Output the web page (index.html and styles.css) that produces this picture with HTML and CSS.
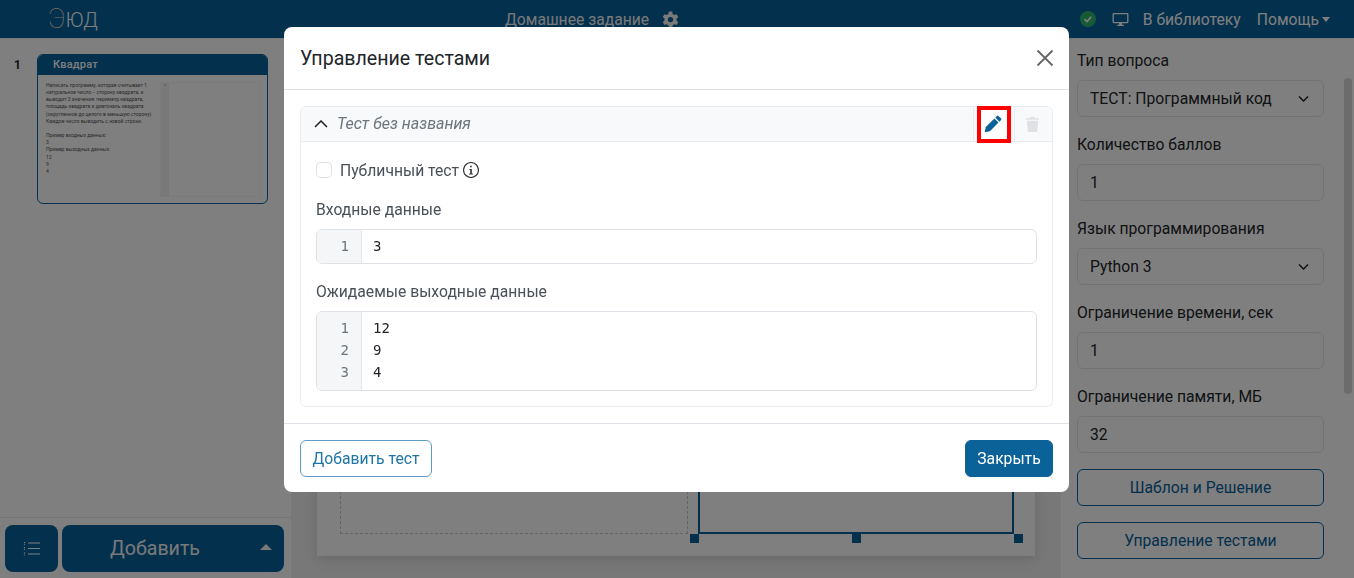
FILE: index.html
```html
<!DOCTYPE html>
<html lang="ru">
<head>
<meta charset="utf-8">
<title>Управление тестами</title>
<link rel="stylesheet" href="styles.css">
</head>
<body>
<div class="app">
  <header class="topbar">
    <div class="logo"><span class="logo-e">Э</span><span class="logo-rest">ЮД</span></div>
    <div class="top-center">
      <span>Домашнее задание</span>
      <svg class="gear" viewBox="1 0.5 14 14"><path fill="currentColor" d="M9.4 1h-2.8l-.4 2a5 5 0 0 0-1.3.75l-1.9-.65L1.6 5.500 3.100 6.850a5 5 0 0 0 0 1.500L1.600 9.700 3 12.100l1.900-.65a5 5 0 0 0 1.300.75l.4 2h2.800l.4-2a5 5 0 0 0 1.300-.75l1.900.65 1.400-2.400-1.500-1.350a5 5 0 0 0 0-1.500l1.500-1.350L13 3.100l-1.900.65A5 5 0 0 0 9.800 3zM8 5.400a2.200 2.200 0 1 1 0 4.400 2.200 2.200 0 0 1 0-4.400z"/></svg>
    </div>
    <div class="top-right">
      <span class="status"><svg viewBox="0 0 16 16"><path fill="none" stroke="currentColor" stroke-width="1.6" d="M4.500 8.200l2.400 2.300 4.400-4.600"/></svg></span>
      <svg class="monitor" viewBox="0 0 18 16"><path fill="none" stroke="currentColor" stroke-width="1.4" d="M2 1.700h14a.8.8 0 0 1 .8.8v8a.8.8 0 0 1-.8.8H2a.8.8 0 0 1-.8-.8v-8a.8.8 0 0 1 .8-.8z"/><path fill="currentColor" d="M7.500 11.500h3v2h2v1.300h-7v-1.300h2z"/></svg>
      <span class="lib">В библиотеку</span>
      <span class="help">Помощь<i class="caret"></i></span>
    </div>
  </header>
  <div class="workspace">
    <aside class="slides">
      <div class="slide-list">
        <div class="slide-num">1</div>
        <div class="thumb">
          <div class="thumb-head">Квадрат</div>
          <div class="thumb-body">
            <div class="thumb-text">
              <p>Написать программу, которая считывает 1<br>натуральное число − сторону квадрата, и<br>выводит 3 значения: периметр квадрата,<br>площадь квадрата и диагональ квадрата<br>(округленное до целого в меньшую сторону).<br>Каждое число выводить с новой строки.</p>
              <p class="gap">Пример входных данных:</p>
              <p>3</p>
              <p>Пример выходных данных:</p>
              <p>12</p>
              <p>9</p>
              <p>4</p>
            </div>
            <div class="thumb-code"><div class="thumb-gutter">1</div></div>
          </div>
        </div>
      </div>
      <div class="slide-actions">
        <button class="btn-list" type="button" aria-label="Список">
          <svg viewBox="0 0 18 14"><path fill="none" stroke="currentColor" stroke-width="1.2" d="M5 1.500h12M5 7h12M5 12.500h12"/><path fill="none" stroke="currentColor" stroke-width="1.2" stroke-dasharray="1.2 1.1" d="M1.500 .5v3M1.500 5.500v3M1.500 11v3"/></svg>
        </button>
        <button class="btn-add" type="button"><span>Добавить</span><i class="caret big"></i></button>
      </div>
    </aside>
    <main class="canvas">
      <div class="slide">
        <div class="drop-zone"></div>
        <div class="selected">
          <i class="handle h-left"></i><i class="handle h-mid"></i><i class="handle h-right"></i>
        </div>
      </div>
    </main>
    <aside class="props">
      <div class="prop-scroll"></div>
      <div class="prop">
        <label>Тип вопроса</label>
        <div class="field select">ТЕСТ: Программный код<svg viewBox="0 0 12 8"><path fill="none" stroke="currentColor" stroke-width="1.5" d="M1.500 1.500L6 6l4.500-4.500"/></svg></div>
      </div>
      <div class="prop">
        <label>Количество баллов</label>
        <div class="field">1</div>
      </div>
      <div class="prop">
        <label>Язык программирования</label>
        <div class="field select">Python 3<svg viewBox="0 0 12 8"><path fill="none" stroke="currentColor" stroke-width="1.5" d="M1.500 1.500L6 6l4.500-4.500"/></svg></div>
      </div>
      <div class="prop">
        <label>Ограничение времени, сек</label>
        <div class="field">1</div>
      </div>
      <div class="prop">
        <label>Ограничение памяти, МБ</label>
        <div class="field">32</div>
      </div>
      <button class="prop-btn" type="button">Шаблон и Решение</button>
      <button class="prop-btn" type="button">Управление тестами</button>
    </aside>
  </div>
</div>

<div class="backdrop"></div>

<section class="modal">
  <div class="modal-head">
    <h2>Управление тестами</h2>
    <svg class="close" viewBox="0 0 18 18"><path fill="none" stroke="currentColor" stroke-width="1.8" d="M1.500 1.500l15 15M16.500 1.500l-15 15"/></svg>
  </div>
  <div class="modal-body">
    <div class="test">
      <div class="test-head">
        <svg class="chev" viewBox="0 0 14 8"><path fill="none" stroke="currentColor" stroke-width="1.5" d="M1 7l6-6 6 6"/></svg>
        <span class="test-name">Тест без названия</span>
        <div class="tool edit">
          <svg viewBox="0 0 18 18"><path fill="#0a6299" d="M13 .9a1 1 0 0 1 1.400 0l2.700 2.700a1 1 0 0 1 0 1.400l-1.700 1.700-4.100-4.100zM10.400 3.500l4.100 4.100-8.600 8.600-5.200 1.100 1.100-5.200z"/></svg>
        </div>
        <div class="tool trash">
          <svg viewBox="0 0 14 16"><path fill="#dfe1e4" d="M4.600 0h4.800l.6 1.200H14v1.700H0V1.200h4zM1 4h12l-.8 11a1 1 0 0 1-1 1H2.800a1 1 0 0 1-1-1z"/></svg>
        </div>
      </div>
      <div class="test-body">
        <div class="check-row">
          <span class="check"></span>
          <span>Публичный тест</span>
          <svg class="info" viewBox="0.500 0.500 15 15"><circle cx="8" cy="8" r="7" fill="none" stroke="currentColor" stroke-width="1.1"/><path fill="currentColor" d="M7.100 3.900h1.600v1.600H7.100zM6.600 7h2.200v4.300h1v1H6.300v-1h1V8h-.7z"/></svg>
        </div>
        <div class="editor-label">Входные данные</div>
        <div class="editor">
          <div class="gutter"><div>1</div></div>
          <div class="code"><div>3</div></div>
        </div>
        <div class="editor-label">Ожидаемые выходные данные</div>
        <div class="editor editor-tall">
          <div class="gutter"><div>1</div><div>2</div><div>3</div></div>
          <div class="code"><div>12</div><div>9</div><div>4</div></div>
        </div>
      </div>
    </div>
  </div>
  <div class="modal-foot">
    <button class="btn-outline" type="button">Добавить тест</button>
    <button class="btn-solid" type="button">Закрыть</button>
  </div>
</section>
</body>
</html>
```
FILE: styles.css
```css
* { box-sizing: border-box; }
html, body { margin: 0; height: 100%; overflow: hidden; }
body { font-family: Roboto, "Liberation Sans", sans-serif; font-size: 15.7px; color: #212529; background: #fff; }
button { font: inherit; cursor: pointer; }

.app { height: 578px; display: flex; flex-direction: column; }

.topbar { height: 39px; flex: none; background: #06609a; border-bottom: 1px solid #e8eef3; color: #fff; display: flex; align-items: center; position: relative; }
.logo { margin-left: 48px; width: 300px; display: flex; align-items: center; color: #fff; line-height: 1; }
.logo-e { font-size: 27px; font-weight: 100; color: #f0dcc8; }
.logo-rest { font-size: 20px; font-weight: 300; margin-top: 2px; }
.top-center { position: absolute; left: 505px; top: 0; height: 38px; display: flex; align-items: center; gap: 13px; color: #f2f2f2; }
.gear { width: 17px; height: 17px; }
.top-right { margin-left: auto; display: flex; align-items: center; margin-right: 24px; }
.status { width: 16px; height: 16px; border-radius: 50%; background: #2fb56c; color: #fff; display: flex; margin-right: 16px; }
.status svg { width: 16px; height: 16px; }
.monitor { width: 17px; height: 15px; margin-right: 14px; }
.lib { margin-right: 16px; }
.help { display: flex; align-items: center; }
.caret { width: 0; height: 0; border-left: 4.5px solid transparent; border-right: 4.5px solid transparent; border-bottom: 0; border-top: 5px solid currentColor; margin-left: 3px; }
.caret.big { border-top: 0; border-bottom: 6px solid currentColor; border-left-width: 6px; border-right-width: 6px; margin-left: 0; position: absolute; right: 12px; top: 19px; }

.workspace { flex: 1; display: flex; min-height: 0; }

.slides { width: 292px; flex: none; background: #fff; border-right: 1px solid #f0f0f0; display: flex; flex-direction: column; }
.slide-list { flex: 1; display: flex; padding: 15px 0 0 14px; border-bottom: 1px solid #ececec; }
.slide-num { width: 23px; font-size: 12px; font-weight: 700; line-height: 23px; }
.thumb { width: 231px; height: 150px; border: 1px solid #06609a; border-radius: 6px; overflow: hidden; background: #fff; }
.thumb-head { height: 20px; background: #06609a; color: #fff; font-size: 11px; font-weight: 500; line-height: 19px; padding-left: 15px; letter-spacing: .2px; }
.thumb-body { display: flex; padding: 7px 7px 6px 8px; gap: 13px; height: 128px; }
.thumb-text { width: 101px; font-size: 5px; line-height: 7.150px; color: #555; flex: none; white-space: nowrap; }
.thumb-text p { margin: 0; }
.thumb-text .gap { margin-top: 7.150px; }
.thumb-code { flex: 1; border: 1px solid #f6f6f6; display: flex; }
.thumb-gutter { width: 8px; background: #f2f2f2; font-size: 4px; text-align: center; color: #888; }

.slide-actions { height: 60px; flex: none; display: flex; gap: 4px; padding: 7px 7px 6px 5px; }
.btn-list { width: 53px; border: 0; border-radius: 8px; background: #06609a; color: #fff; display: flex; align-items: center; justify-content: center; padding: 0; }
.btn-list svg { width: 18px; height: 15px; }
.btn-add { flex: 1; border: 0; border-radius: 8px; background: #06609a; color: #f2f2f2; font-size: 19.600px; position: relative; padding: 0 36px 0 0; }

.canvas { flex: 1; min-width: 0; background: #f0f0f0; display: flex; flex-direction: column; justify-content: flex-end; padding: 0 26px 22px 25px; }
.slide { height: 490px; background: #fff; box-shadow: 0 4px 12px rgba(0,0,0,.12); position: relative; padding: 0 21px 22px 23px; display: flex; gap: 10px; }
.drop-zone { width: 348px; border: 1px dashed #c8c8c8; }
.selected { flex: 1; border: 2px solid #06609a; position: relative; }
.handle { position: absolute; width: 9px; height: 9px; background: #06609a; bottom: -11px; }
.h-left { left: -10px; }
.h-mid { left: 152px; }
.h-right { right: -11px; }

.props { width: 293px; flex: none; background: #fff; padding: 10px 30px 0 16px; position: relative; }
.prop-scroll { position: absolute; right: 2px; top: 39px; width: 8px; height: 316px; border-radius: 4px; background: #d9d9d9; }
.prop { height: 84px; }
.prop label { display: block; line-height: 24px; height: 31px; color: #212529; }
.field { height: 37px; border: 1px solid #e6e6e6; border-radius: 6px; background: #fff; padding: 0 12px; display: flex; align-items: center; justify-content: space-between; }
.field svg { width: 13px; height: 8px; margin-right: 1px; }
.prop-btn { display: block; width: 100%; height: 37px; margin-bottom: 16px; background: #fff; border: 1px solid #06609a; border-radius: 6px; color: #06609a; }

.backdrop { position: fixed; inset: 0; background: rgba(0,0,0,.5); }

.modal { position: fixed; left: 284px; top: 27px; width: 785px; height: 465px; background: #fff; border-radius: 8px; display: flex; flex-direction: column; }
.modal-head { height: 63px; flex: none; border-bottom: 1px solid #dee2e6; display: flex; align-items: center; justify-content: space-between; padding: 0 15px 0 16px; }
.modal-head h2 { margin: 0; font-size: 19.600px; font-weight: 400; color: #212529; }
.close { width: 18px; height: 18px; color: #666; }
.modal-body { flex: 1; padding: 16px; border-bottom: 1px solid #dee2e6; }
.test { border: 1px solid #e9ecef; border-radius: 6px; height: 301px; }
.test-head { height: 35px; background: #f8f9fa; border-bottom: 1px solid #e9ecef; border-radius: 6px 6px 0 0; display: flex; align-items: center; position: relative; padding-left: 13px; }
.chev { width: 14px; height: 8px; color: #222; margin-right: 9px; }
.test-name { font-size: 16px; font-style: italic; color: #6c757d; flex: 1; align-self: stretch; line-height: 34px; border-right: 1px solid #e9ecef; margin-right: 3px; }
.tool { width: 34px; height: 36px; display: flex; align-items: center; justify-content: center; }
.edit { width: 34px; height: 37px; flex: none; outline: 4px solid #f00; outline-offset: -4px; margin-right: 3px; background: #fff; }
.edit svg { width: 18px; height: 18px; margin-right: 2px; }
.trash { width: 38px; height: 34px; flex: none; border-left: 1px solid #e9ecef; }
.trash svg { width: 13px; height: 15px; margin-right: 2px; }
.test-body { padding: 16px 15px; }
.check-row { display: flex; align-items: center; height: 24px; color: #495057; }
.check { width: 16px; height: 16px; border: 1px solid #dee2e6; border-radius: 4px; margin-right: 8px; background: #fff; }
.info { width: 16px; height: 16px; margin-left: 4px; color: #333; }
.editor-label { margin-top: 16px; margin-bottom: 7px; line-height: 24px; color: #495057; height: 24px; }
.editor { display: flex; border: 1px solid #dee2e6; border-radius: 6px; overflow: hidden; font-family: "DejaVu Sans Mono", "Liberation Mono", monospace; font-size: 14px; line-height: 22px; }
.editor-tall { height: 80px; }
.gutter { width: 45px; flex: none; background: #f5f6f7; border-right: 1px solid #e4e6e8; text-align: right; padding: 5px 12px 6px; color: #6c757d; }
.code { flex: 1; padding: 5px 12px 6px 11px; color: #212529; }

.modal-foot { height: 69px; flex: none; display: flex; align-items: center; justify-content: space-between; padding: 0 16px; }
.btn-outline { height: 37px; width: 132px; background: #fff; border: 1px solid #5b9cc4; border-radius: 6px; color: #1f74a8; padding: 0; }
.btn-solid { height: 37px; width: 88px; border: 1px solid #0a6299; background: #0a6299; border-radius: 6px; color: #fff; padding: 0; }
```
